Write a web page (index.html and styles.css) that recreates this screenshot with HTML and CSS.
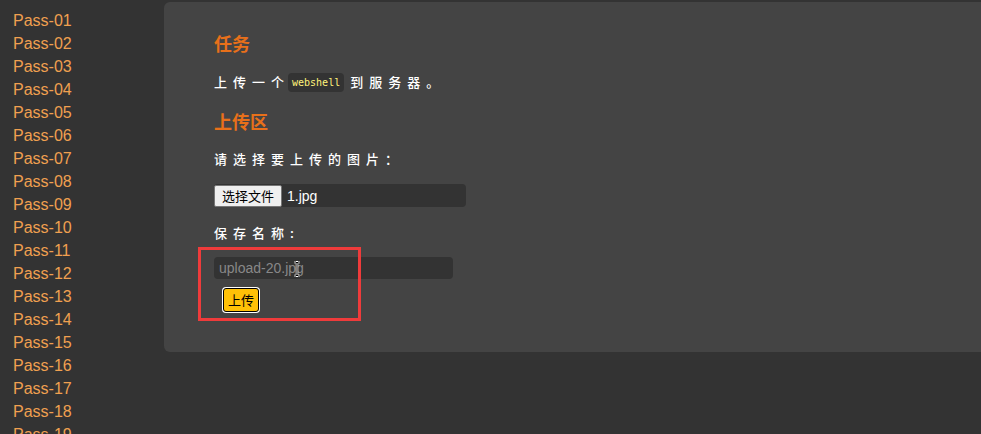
FILE: index.html
```html
<!DOCTYPE html>
<html lang="zh-CN">
<head>
    <meta charset="UTF-8">
    <meta name="viewport" content="width=device-width, initial-scale=1.0">
    <title>upload-labs</title>
    <link rel="stylesheet" href="styles.css">
</head>
<body>
    <div class="layout">
        <!-- Level menu -->
        <ul class="menu">
            <li><a href="#">Pass-01</a></li>
            <li><a href="#">Pass-02</a></li>
            <li><a href="#">Pass-03</a></li>
            <li><a href="#">Pass-04</a></li>
            <li><a href="#">Pass-05</a></li>
            <li><a href="#">Pass-06</a></li>
            <li><a href="#">Pass-07</a></li>
            <li><a href="#">Pass-08</a></li>
            <li><a href="#">Pass-09</a></li>
            <li><a href="#">Pass-10</a></li>
            <li><a href="#">Pass-11</a></li>
            <li><a href="#">Pass-12</a></li>
            <li><a href="#">Pass-13</a></li>
            <li><a href="#">Pass-14</a></li>
            <li><a href="#">Pass-15</a></li>
            <li><a href="#">Pass-16</a></li>
            <li><a href="#">Pass-17</a></li>
            <li><a href="#">Pass-18</a></li>
            <li><a href="#">Pass-19</a></li>
        </ul>

        <!-- Task panel -->
        <div class="panel">
            <h3>任务</h3>
            <p class="desc">上传一个<code>webshell</code>到服务器。</p>

            <h3 class="upload-title">上传区</h3>
            <form class="upload-form">
                <p class="label">请选择要上传的图片：</p>
                <div class="file-box">
                    <span class="file-btn">选择文件</span>
                    <span class="file-name">1.jpg</span>
                </div>
                <p class="label">保存名称:</p>
                <div class="save-area">
                    <div class="save-box">
                        <input type="text" class="save-name" value="upload-20.jpg">
                        <svg class="ibeam" width="8" height="16" viewBox="0 0 8 16">
                            <path d="M1 1h2l1 1 1-1h2M4 2v12M1 15h2l1-1 1 1h2" fill="none" stroke="#fff" stroke-width="2.5"/>
                            <path d="M1 1h2l1 1 1-1h2M4 2v12M1 15h2l1-1 1 1h2" fill="none" stroke="#000" stroke-width="1"/>
                        </svg>
                    </div>
                    <button type="button" class="submit-btn">上传</button>
                    <div class="highlight"></div>
                </div>
            </form>
        </div>
    </div>
</body>
</html>
```

FILE: styles.css
```css
/* General Styles */
body {
    margin: 0;
    padding: 0;
    background: #333;
    font-family: 'Liberation Sans', Arial, 'Noto Sans CJK SC', sans-serif;
    color: #eee;
    height: 434px;
    overflow: hidden;
}

.layout {
    display: flex;
    align-items: flex-start;
}

/* Menu */
.menu {
    list-style: none;
    margin: 0;
    padding: 9px 0 0 13px;
    width: 151px;
    flex-shrink: 0;
}

.menu li {
    line-height: 23px;
    font-size: 16px;
}

.menu a {
    color: #f0a050;
    text-decoration: none;
}

/* Panel */
.panel {
    flex: 1;
    margin-top: 2px;
    height: 350px;
    box-sizing: border-box;
    padding: 29px 50px 0;
    background: #444;
    border-radius: 6px 0 0 6px;
}

.panel h3 {
    margin: 0;
    font-size: 18px;
    line-height: 24px;
    color: #e8701a;
    font-family: 'Noto Sans CJK SC', sans-serif;
    font-weight: bold;
}

.desc {
    margin: 16px 0 16px;
    font-size: 13px;
    letter-spacing: 6px;
    line-height: 22px;
    color: #fff;
    font-weight: 500;
    font-family: 'Noto Sans CJK SC', sans-serif;
}

.desc code {
    display: inline-block;
    margin: 0 6px 0 -2px;
    padding: 0 4px;
    line-height: 19px;
    background: #333;
    border-radius: 4px;
    color: #fff27a;
    font-family: 'DejaVu Sans Mono', monospace;
    font-size: 10px;
    font-weight: normal;
    letter-spacing: 0;
    vertical-align: 1px;
}

.upload-form {
    margin-top: 16px;
}

.label {
    margin: 0;
    font-size: 13px;
    letter-spacing: 6px;
    line-height: 20px;
    color: #fff;
    font-weight: 500;
    font-family: 'Noto Sans CJK SC', sans-serif;
}

.file-box {
    display: flex;
    align-items: center;
    width: 252px;
    height: 23px;
    margin: 15px 0 16px;
    background: #333;
    border-radius: 4px;
}

.file-btn {
    font-size: 13px;
    padding: 1px 7px;
    line-height: 18px;
    color: #000;
    background: #efefef;
    border: 1px solid #767676;
    border-radius: 2px;
    font-family: 'Noto Sans CJK SC', sans-serif;
}

.file-name {
    margin-left: 5px;
    font-size: 14px;
    color: #fff;
}

.save-area {
    position: relative;
    margin-top: 14px;
}

.save-box {
    position: relative;
    width: 239px;
}

.save-name {
    display: block;
    width: 100%;
    height: 22px;
    box-sizing: border-box;
    padding: 0 5px;
    border: none;
    border-radius: 4px;
    background: #333;
    color: #888;
    font-size: 14px;
    font-family: 'Liberation Sans', Arial, sans-serif;
    outline: none;
}

.ibeam {
    position: absolute;
    left: 79px;
    top: 4px;
}

.submit-btn {
    display: block;
    margin: 9px 0 0 9px;
    padding: 3px 4px;
    font-size: 13px;
    line-height: 16px;
    background: #ffc107;
    color: #000;
    border: 1px solid #000;
    border-radius: 3px;
    box-shadow: 0 0 0 1px #fff;
    font-family: 'Noto Sans CJK SC', sans-serif;
    cursor: pointer;
}

/* Annotation box */
.highlight {
    position: absolute;
    left: -16px;
    top: -10px;
    width: 157px;
    height: 68px;
    border: 3px solid #ef3b3b;
    pointer-events: none;
}
```
